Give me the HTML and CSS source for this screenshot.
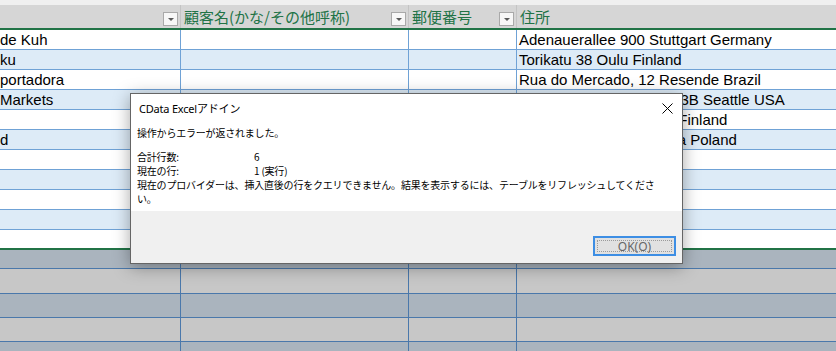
FILE: index.html
```html
<!DOCTYPE html>
<html lang="ja">
<head>
  <meta charset="UTF-8">
  <title>CData Excel Add-in</title>
  <link rel="stylesheet" href="styles.css">
</head>
<body>
  <div class="sheet">
    <div class="topstrip"></div>

    <div class="thead">
      <div class="th"><span class="filter"></span></div>
      <div class="th">顧客名(かな/その他呼称)<span class="filter"></span></div>
      <div class="th">郵便番号<span class="filter"></span></div>
      <div class="th">住所</div>
    </div>

    <div class="tbody">
      <div class="row"><div class="td">de Kuh</div><div class="td"></div><div class="td"></div><div class="td">Adenauerallee 900 Stuttgart Germany</div></div>
      <div class="row band"><div class="td">ku</div><div class="td"></div><div class="td"></div><div class="td">Torikatu 38 Oulu Finland</div></div>
      <div class="row"><div class="td">portadora</div><div class="td"></div><div class="td"></div><div class="td">Rua do Mercado, 12 Resende Brazil</div></div>
      <div class="row band"><div class="td">Markets</div><div class="td"></div><div class="td"></div><div class="td">305 - 14th Ave. S. Suite 3B Seattle USA</div></div>
      <div class="row"><div class="td"></div><div class="td"></div><div class="td"></div><div class="td">Keskuskatu 45 Helsinki Finland</div></div>
      <div class="row band"><div class="td">d</div><div class="td"></div><div class="td"></div><div class="td">ul. Filtrowa 68 Warszawa Poland</div></div>
      <div class="row"><div class="td"></div><div class="td"></div><div class="td"></div><div class="td"></div></div>
      <div class="row band"><div class="td"></div><div class="td"></div><div class="td"></div><div class="td"></div></div>
      <div class="row"><div class="td"></div><div class="td"></div><div class="td"></div><div class="td"></div></div>
      <div class="row band"><div class="td"></div><div class="td"></div><div class="td"></div><div class="td"></div></div>
      <div class="row last"><div class="td"></div><div class="td"></div><div class="td"></div><div class="td"></div></div>
    </div>

    <div class="under">
      <div class="urow blue first"><div class="uc"></div><div class="uc"></div><div class="uc"></div><div class="uc"></div></div>
      <div class="urow grey tall"><div class="uc"></div><div class="uc"></div><div class="uc"></div><div class="uc"></div></div>
      <div class="urow blue"><div class="uc"></div><div class="uc"></div><div class="uc"></div><div class="uc"></div></div>
      <div class="urow grey"><div class="uc"></div><div class="uc"></div><div class="uc"></div><div class="uc"></div></div>
      <div class="urow blue"><div class="uc"></div><div class="uc"></div><div class="uc"></div><div class="uc"></div></div>
    </div>

    <div class="dialog">
      <div class="dlg-title">
        <span>CData Excelアドイン</span>
        <svg class="close" width="11" height="11" viewBox="0 0 11 11">
          <path d="M0.5 0.5 L10.5 10.5 M10.5 0.5 L0.5 10.5" stroke="#000" stroke-width="1" fill="none"/>
        </svg>
      </div>
      <div class="dlg-body">
        <p class="msg">操作からエラーが返されました。</p>
        <div class="details">
          <span>合計行数:</span><span>6</span>
          <span>現在の行:</span><span>1 (実行)</span>
        </div>
        <p class="long">現在のプロバイダーは、挿入直後の行をクエリできません。結果を表示するには、テーブルをリフレッシュしてください。</p>
      </div>
      <div class="dlg-foot">
        <button class="ok"><span>OK(O)</span></button>
      </div>
    </div>
  </div>
</body>
</html>
```

FILE: styles.css
```css
body {
  margin: 0;
  font-family: "Liberation Sans", Arial, sans-serif;
  background: #fff;
  overflow: hidden;
}

.sheet {
  position: relative;
  width: 836px;
  height: 351px;
  overflow: hidden;
}

.topstrip {
  height: 5px;
  background: #f0f0f0;
}

/* table columns */
.thead, .row, .urow {
  display: grid;
  grid-template-columns: 181px 228px 108px 1fr;
}

.thead {
  height: 23px;
  background: #d6d6d6;
  border-bottom: 2px solid #217346;
}

.th {
  position: relative;
  border-right: 1px solid #c4c4c4;
  padding-left: 3px;
  font-family: "Noto Sans CJK JP", sans-serif;
  font-size: 15px;
  line-height: 23px;
  color: #217346;
  white-space: nowrap;
}

.th:last-child {
  border-right: none;
}

.filter {
  position: absolute;
  right: 2px;
  top: 7px;
  width: 13px;
  height: 12px;
  background: #f7f7f7;
  border: 1px solid #a9a9a9;
}

.filter::after {
  content: "";
  position: absolute;
  left: 4px;
  top: 5px;
  border-left: 3px solid transparent;
  border-right: 3px solid transparent;
  border-top: 3px solid #595959;
}

.row {
  height: 20px;
  border-bottom: 1px solid #6fa2d6;
  box-sizing: border-box;
}

.row.band {
  background: #ddebf7;
}

.row.last {
  height: 20px;
  border-bottom: 2px solid #217346;
}

.td {
  border-right: 1px solid #6fa2d6;
  font-size: 15px;
  line-height: 19px;
  color: #000;
  padding-left: 2px;
  white-space: nowrap;
  overflow: hidden;
}

.td:first-child {
  padding-left: 0;
}

.td:last-child {
  border-right: none;
}

/* rows under the table */
.urow {
  height: 24px;
  border-bottom: 1px solid #4a78ab;
  box-sizing: border-box;
}

.urow.first {
  height: 19px;
}

.urow.tall {
  height: 25px;
}

.urow.blue {
  background: #aab4be;
}

.urow.grey {
  background: #c7c7c7;
}

.uc {
  border-right: 1px solid #4a78ab;
}

.uc:last-child {
  border-right: none;
}

/* message box */
.dialog {
  position: absolute;
  left: 130px;
  top: 93px;
  width: 553px;
  height: 171px;
  box-sizing: border-box;
  border: 1px solid #656565;
  background: #fff;
  box-shadow: 0 3px 16px rgba(0, 0, 0, 0.35);
  display: flex;
  flex-direction: column;
  font-family: "Noto Sans CJK JP", sans-serif;
  color: #000;
}

.dlg-title {
  height: 28px;
  display: flex;
  align-items: center;
  justify-content: space-between;
  padding: 0 9px 0 8px;
  font-family: "Noto Sans", "Noto Sans CJK JP", sans-serif;
  font-size: 11px;
  letter-spacing: -0.2px;
}

.dlg-body {
  flex: 1;
  padding: 4px 6px 0 6px;
  font-size: 10px;
  line-height: 14px;
  letter-spacing: -0.2px;
}

.msg {
  margin: 0 0 10px;
}

.details {
  display: grid;
  grid-template-columns: 117px 1fr;
}

.long {
  margin: 0;
  width: 526px;
}

.dlg-foot {
  height: 52px;
  background: #f0f0f0;
  display: flex;
  justify-content: flex-end;
  align-items: flex-end;
  padding: 0 6px 7px 0;
  box-sizing: border-box;
}

.ok {
  width: 83px;
  height: 20px;
  padding: 2px;
  border: 2px solid #3d8ee4;
  background: #e1e1e1;
  font-family: "Noto Sans", sans-serif;
  font-size: 12px;
  color: #666;
  box-sizing: border-box;
  display: flex;
}

.ok span {
  flex: 1;
  border: 1px dotted #9a9a9a;
  line-height: 12px;
  text-align: center;
}
```
